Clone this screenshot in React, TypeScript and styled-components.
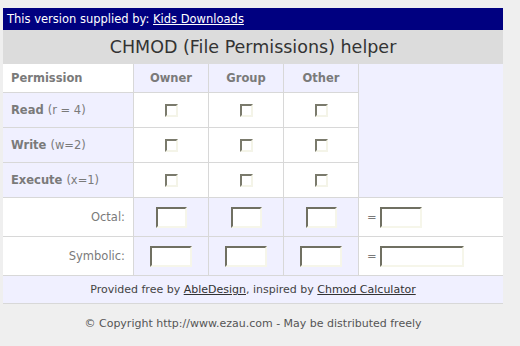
import React from 'react'
import styled, { createGlobalStyle } from 'styled-components'

const GlobalStyle = createGlobalStyle`
  body {
    margin: 0;
    background: #efefef;
    font-family: "DejaVu Sans", Verdana, sans-serif;
  }
`

const Page = styled.div`
  width: 500px;
  padding: 8px 0 0 3px;
`

const TopBar = styled.div`
  height: 22px;
  background: #000080;
  color: #fff;
  font-size: 11.5px;
  line-height: 22px;
  padding-left: 4px;
  a { color: #fff; }
`

const Title = styled.div`
  height: 34px;
  background: #dcdcdc;
  color: #333;
  font-size: 17.5px;
  line-height: 34px;
  text-align: center;
`

const Grid = styled.div`
  display: grid;
  grid-template-columns: 130px 74px 74px 74px 144px;
  grid-template-rows: 28px 34px 34px 34px 38px 38px 27px;
  gap: 1px;
  background: #d8d8d8;
  border-bottom: 1px solid #d8d8d8;
`

const Cell = styled.div<{ $bg?: string; $align?: string }>`
  background: ${p => p.$bg || '#fff'};
  display: flex;
  align-items: center;
  justify-content: ${p => p.$align || 'center'};
  color: #7a7a7a;
  font-size: 11.5px;
`

const HeadCell = styled(Cell)`
  font-weight: bold;
`

const LabelCell = styled(Cell)`
  justify-content: flex-start;
  padding-left: 8px;
  b { margin-right: 4px; }
`

const ConvLabel = styled(Cell)`
  justify-content: flex-end;
  padding-right: 8px;
`

const Filler = styled.div`
  background: #f0f0ff;
  grid-column: 5;
  grid-row: 1 / span 4;
`

const Result = styled(Cell)`
  justify-content: flex-start;
  padding-left: 8px;
  gap: 3px;
`

const Box = styled.input.attrs({ type: 'checkbox' })`
  appearance: none;
  margin: 0;
  width: 13px;
  height: 13px;
  box-sizing: border-box;
  border: 2px solid;
  border-color: #7a7a6c #f4f4e8 #f4f4e8 #7a7a6c;
  background: #fff;
`

const Field = styled.input.attrs({ type: 'text' })<{ $w: number }>`
  width: ${p => p.$w}px;
  height: 21px;
  box-sizing: border-box;
  margin: 0;
  padding: 0 2px;
  border: 2px solid;
  border-color: #707062 #f6f6ea #f6f6ea #707062;
  background: #fff;
  font-size: 11px;
`

const Footer = styled.div`
  grid-column: 1 / span 5;
  background: #f0f0ff;
  display: flex;
  align-items: center;
  justify-content: center;
  font-size: 11px;
  color: #444;
  a { color: #333; }
`

const Copy = styled.div`
  text-align: center;
  font-size: 11px;
  color: #555;
  margin-top: 13px;
`

const perms = [
  { name: 'Read', note: '(r = 4)' },
  { name: 'Write', note: '(w=2)' },
  { name: 'Execute', note: '(x=1)' },
]

const App: React.FC = () => {
  return (
    <Page>
      <GlobalStyle />
      <TopBar>
        This version supplied by: <a href="#">Kids Downloads</a>
      </TopBar>
      <Title>CHMOD (File Permissions) helper</Title>
      <Grid>
        <HeadCell $align="flex-start" style={{ paddingLeft: 8 }}>Permission</HeadCell>
        <HeadCell $bg="#f0f0ff">Owner</HeadCell>
        <HeadCell $bg="#f0f0ff">Group</HeadCell>
        <HeadCell $bg="#f0f0ff">Other</HeadCell>
        <Filler />
        {perms.map(p => (
          <React.Fragment key={p.name}>
            <LabelCell $bg="#f0f0ff">
              <b>{p.name}</b>
              {p.note}
            </LabelCell>
            <Cell><Box /></Cell>
            <Cell><Box /></Cell>
            <Cell><Box /></Cell>
          </React.Fragment>
        ))}
        <ConvLabel>Octal:</ConvLabel>
        <Cell $bg="#f0f0ff"><Field $w={31} /></Cell>
        <Cell $bg="#f0f0ff"><Field $w={31} /></Cell>
        <Cell $bg="#f0f0ff"><Field $w={31} /></Cell>
        <Result>= <Field $w={42} /></Result>
        <ConvLabel>Symbolic:</ConvLabel>
        <Cell $bg="#f0f0ff"><Field $w={42} /></Cell>
        <Cell $bg="#f0f0ff"><Field $w={42} /></Cell>
        <Cell $bg="#f0f0ff"><Field $w={42} /></Cell>
        <Result>= <Field $w={84} /></Result>
        <Footer>
          Provided free by&nbsp;<a href="#">AbleDesign</a>, inspired by&nbsp;<a href="#">Chmod Calculator</a>
        </Footer>
      </Grid>
      <Copy>© Copyright http://www.ezau.com - May be distributed freely</Copy>
    </Page>
  )
}

export default App
